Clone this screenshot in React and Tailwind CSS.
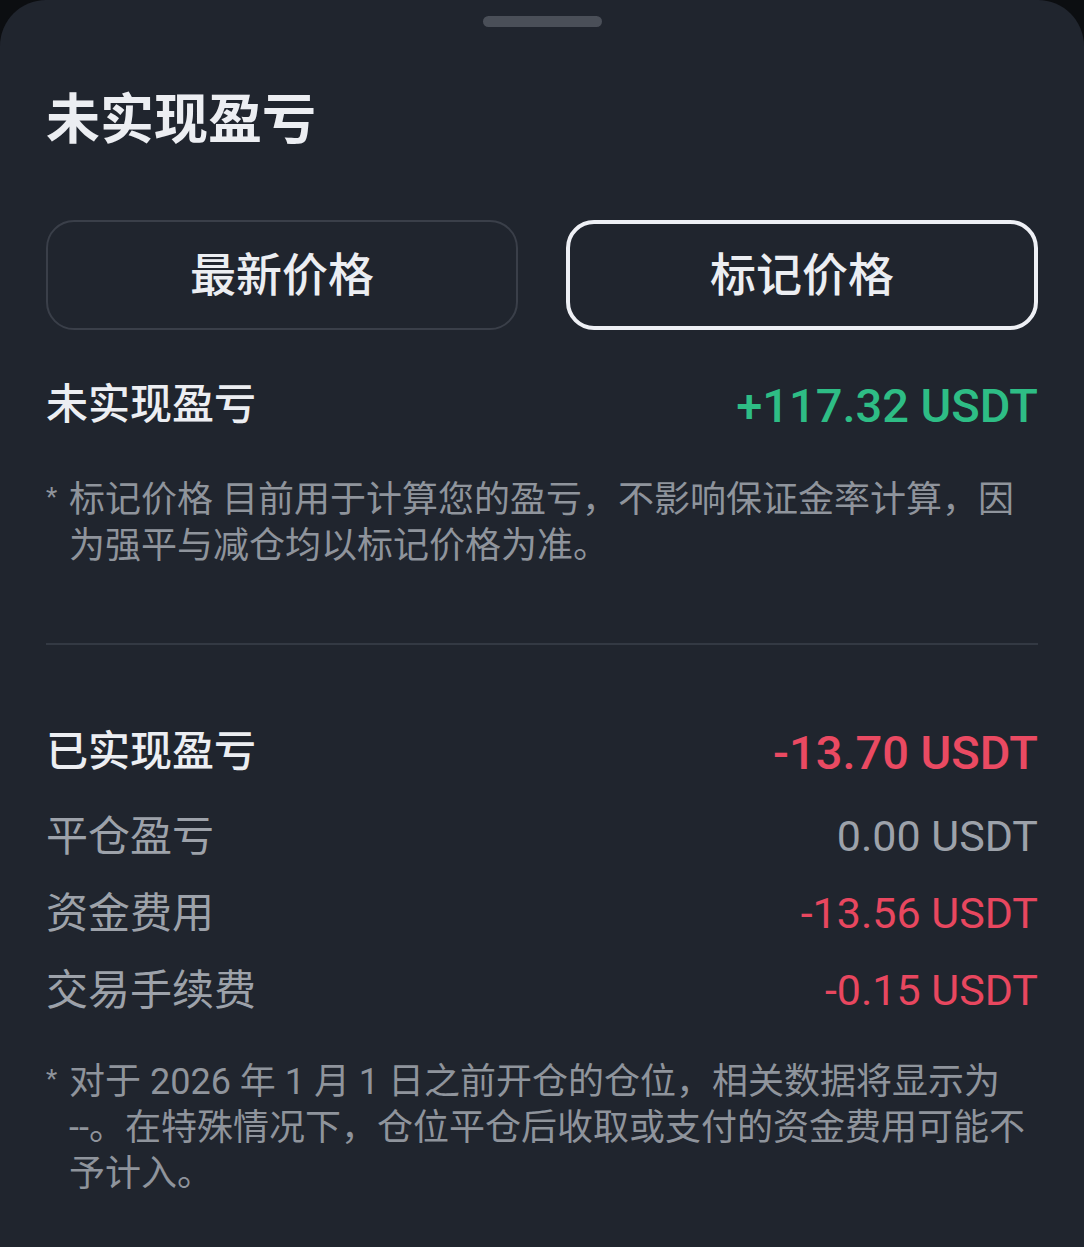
import React from "react";

const FONT = "font-['Roboto','Noto_Sans_CJK_SC',sans-serif]";

function SubRow({ label, value, valueClass }) {
  return (
    <div className="flex h-[77px] items-center justify-between">
      <span className="text-[42px] leading-none text-[#9da2aa]">{label}</span>
      <span className={`text-[43px] leading-none ${valueClass}`}>{value}</span>
    </div>
  );
}

function Note({ lines, className = "" }) {
  return (
    <div className={`flex text-[36px] leading-[46px] text-[#8f949c] ${className}`}>
      <span className="w-[23px] shrink-0 text-[26px] leading-[40px]">*</span>
      <div className="flex flex-col">
        {lines.map((l, i) => (
          <span key={i} className="whitespace-nowrap">{l}</span>
        ))}
      </div>
    </div>
  );
}

export default function App() {
  return (
    <div className={`h-[1247px] w-[1084px] bg-[#0c0e11] ${FONT}`}>
      <div className="flex h-full flex-col rounded-t-[46px] bg-[#20252e] px-[46px]">
        <div className="flex justify-center pt-[16px]">
          <div className="h-[11px] w-[119px] rounded-full bg-[#4a4f58]" />
        </div>

        <div className="mt-[59px] flex h-[70px] items-center text-[54px] font-bold leading-none text-[#eceef2]">
          未实现盈亏
        </div>

        <div className="mt-[64px] grid grid-cols-2 gap-[48px]">
          <button className="flex h-[110px] items-center justify-center rounded-[28px] border-2 border-[#3a3f49] text-[46px] font-medium leading-none text-[#eceef2]">
            最新价格
          </button>
          <button className="flex h-[110px] items-center justify-center rounded-[28px] border-[4px] border-[#eef0f5] text-[46px] font-medium leading-none text-[#eceef2]">
            标记价格
          </button>
        </div>

        <div className="mt-[40px] flex h-[70px] items-center justify-between">
          <span className="text-[42px] font-medium leading-none text-[#eceef2]">未实现盈亏</span>
          <span className="text-[47px] font-medium leading-none text-[#2ebd85]">+117.32 USDT</span>
        </div>

        <Note
          className="mt-[37px]"
          lines={["标记价格 目前用于计算您的盈亏，不影响保证金率计算，因", "为强平与减仓均以标记价格为准。"]}
        />

        <div className="mt-[74px] h-[2px] bg-[#333943]" />

        <div className="mt-[72px] flex h-[70px] items-center justify-between">
          <span className="text-[42px] font-medium leading-none text-[#eceef2]">已实现盈亏</span>
          <span className="text-[47px] font-medium leading-none text-[#ea4a62]">-13.70 USDT</span>
        </div>

        <div className="mt-[11px] flex flex-col">
          <SubRow label="平仓盈亏" value="0.00 USDT" valueClass="text-[#9da2aa]" />
          <SubRow label="资金费用" value="-13.56 USDT" valueClass="text-[#e8475f]" />
          <SubRow label="交易手续费" value="-0.15 USDT" valueClass="text-[#e8475f]" />
        </div>

        <Note
          className="mt-[30px]"
          lines={[
            "对于 2026 年 1 月 1 日之前开仓的仓位，相关数据将显示为",
            "--。在特殊情况下，仓位平仓后收取或支付的资金费用可能不",
            "予计入。",
          ]}
        />
      </div>
    </div>
  );
}
